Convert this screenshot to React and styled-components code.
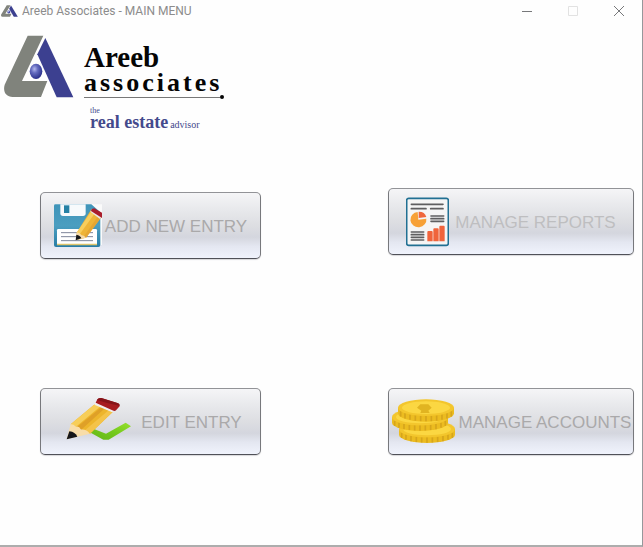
import React from "react";
import styled, { createGlobalStyle } from "styled-components";

const GlobalStyle = createGlobalStyle`
  * { box-sizing: border-box; }
  body { margin: 0; background: #fefefe; font-family: "Liberation Sans", Arial, sans-serif; }
`;

const Window = styled.div`
  display: flex;
  flex-direction: column;
  min-height: 100vh;
  background: #fefefe;
  border-right: 1px solid #96979b;
  border-bottom: 2px solid #adadad;
`;

const TitleBar = styled.header`
  display: flex;
  align-items: center;
  height: 22px;
  gap: 4px;
  padding-left: 1px;
`;

const Title = styled.h1`
  flex: 1;
  margin: 0;
  font: 400 12px/16px Roboto, "Segoe UI", sans-serif;
  color: #8c8c8c;
  white-space: nowrap;
`;

const WindowControls = styled.div`
  display: flex;
`;

const ControlButton = styled.button`
  display: flex;
  align-items: center;
  justify-content: center;
  width: 46px;
  height: 22px;
  padding: 0;
  border: 0;
  background: transparent;
  color: ${(p) => (p.disabled ? "#e2e2e2" : "#77787a")};
`;

const Brand = styled.section`
  display: flex;
  align-items: flex-start;
  gap: 10px;
  padding: 13px 4px 0;
`;

const BrandText = styled.div`
  display: flex;
  flex-direction: column;
  padding-top: 8px;
  font-family: "Liberation Serif", "Times New Roman", serif;
`;

const BrandName = styled.span`
  font-size: 29px;
  line-height: 28px;
  font-weight: 700;
  color: #050505;
`;

const BrandSubname = styled.span`
  font-size: 26px;
  line-height: 24px;
  font-weight: 700;
  letter-spacing: 3px;
  color: #050505;
`;

const BrandRule = styled.div`
  display: flex;
  align-items: center;
  width: 140px;
  height: 4px;

  &::before {
    content: "";
    flex: 1;
    height: 1px;
    background: #777;
  }
  &::after {
    content: "";
    width: 4px;
    height: 4px;
    border-radius: 50%;
    background: #050505;
  }
`;

const Tagline = styled.p`
  display: grid;
  grid-template-columns: auto 1fr;
  column-gap: 2px;
  align-items: baseline;
  margin: 8px 0 0 6px;
  color: #444a8c;
`;

const TaglineThe = styled.span`
  grid-column: 1 / -1;
  font-size: 8px;
  line-height: 8px;
`;

const TaglineMain = styled.strong`
  font-size: 18px;
  line-height: 14px;
`;

const TaglineEnd = styled.span`
  font-size: 10px;
  line-height: 14px;
`;

const Menu = styled.nav`
  display: flex;
  justify-content: space-between;
  align-items: flex-end;
  gap: 24px;
  padding: 56px 8px 32px 40px;
`;

const MenuColumn = styled.div`
  display: flex;
  flex-direction: column;
  gap: ${(p) => p.$gap}px;
  width: ${(p) => p.$width}px;
`;

const MenuButton = styled.button`
  display: flex;
  align-items: center;
  justify-content: center;
  gap: ${(p) => p.$gap || 3}px;
  height: 67px;
  padding: 0;
  border: 1px solid #77787c;
  border-top-color: #929397;
  border-bottom-color: #505158;
  border-radius: 5px;
  background: linear-gradient(#f5f5f7 0%, #e8e9ec 25%, #dddee2 50%, #d4d6de 68%, #e4e7f1 82%, #f0f3fc 100%);
  box-shadow: 0 1px 1px #d8d8da;
  color: ${(p) => (p.$faint ? "#bebec0" : "#aaa9aa")};
  font: 400 17px/20px "Liberation Sans", Arial, sans-serif;
  white-space: nowrap;
`;

const Label = styled.span`
  padding-top: 2px;
`;

const Icon = styled.svg`
  display: block;
  flex: none;
`;

function LogoMark({ width, height }) {
  return (
    <Icon width={width} height={height} viewBox="12 105 210 189" preserveAspectRatio="none" aria-hidden="true">
      <defs>
        <radialGradient id="orb" cx="38%" cy="35%" r="65%">
          <stop offset="0" stopColor="#b4b9ee" />
          <stop offset=".4" stopColor="#656cc0" />
          <stop offset="1" stopColor="#2b318c" />
        </radialGradient>
      </defs>
      <path d="M83 107H130L66 243H142L123 291H38C18 291 8 275 14 254Z" fill="#80837c" />
      <path d="M136 114L220 292H170L112 163Z" fill="#3c4090" />
      <ellipse cx="108" cy="214" rx="19" ry="23" fill="url(#orb)" />
    </Icon>
  );
}

function DiskIcon() {
  return (
    <Icon width="48" height="48" viewBox="72 65 144 144" aria-hidden="true">
      <defs>
        <linearGradient id="disk" x1="0" y1="0" x2="0" y2="1">
          <stop offset="0" stopColor="#3f94b9" />
          <stop offset=".5" stopColor="#4b9ec0" />
          <stop offset="1" stopColor="#287da5" />
        </linearGradient>
      </defs>
      <path d="M72 72H216V194H72Z" fill="#fafafa" />
      <path d="M76 72H184L211 96V194Q211 200 205 200H78Q72 200 72 194V76Q72 72 76 72Z" fill="url(#disk)" />
      <path d="M91 72H167V99Q167 107 159 107H99Q91 107 91 99Z" fill="#f7fafc" />
      <path d="M102 75H118V98H102Z" fill="#2681a5" />
      <path d="M81 150Q81 146 85 146H197Q201 146 201 150V194H81Z" fill="#fff" />
      <path d="M81 190H201V195H81Z" fill="#dfc56b" />
      <path d="M93 157H189M93 169H189M93 181H189" stroke="#7e8599" strokeWidth="3" />
      <path d="M140 157L143 178L168 172L215 109L184 87Z" fill="#eeb437" />
      <path d="M140 157L183 94L193 101L148 163Z" fill="#f8ce5d" />
      <path d="M160 171L206 105L214 111L168 172Z" fill="#e5a633" />
      <path d="M140 156L138 179L168 172Q162 165 155 165Q150 157 140 156Z" fill="#f5d9a7" />
      <path d="M139 163L137 180L154 174Q151 165 139 163Z" fill="#171719" />
      <path d="M181 94L186 87L216 108L210 116Z" fill="#e9e7e5" />
      <path d="M183 92Q184 84 193 84L216 97V113Z" fill="#a91d2b" />
    </Icon>
  );
}

function ReportIcon() {
  return (
    <Icon width="43" height="50" viewBox="77 48 129 150" aria-hidden="true">
      <rect x="79" y="52" width="125" height="141" rx="6" fill="#f5f5f5" stroke="#217093" strokeWidth="5" />
      <g stroke="#5e5e60" strokeWidth="5" strokeLinecap="round">
        <path d="M93 70H188M93 83H137M151 83H188M152 105H190M152 113H190M152 121H190M93 153H130M93 161H130M93 169H130M93 177H130" />
      </g>
      <path d="M114 116L112 93A24 23 0 1 0 138 113Z" fill="#f7a136" />
      <path d="M115 111V92A23 22 0 0 1 138 108Z" fill="#ef663c" />
      <path d="M141 153Q141 150 144 150H154Q157 150 157 153V181H141ZM159 145Q159 142 162 142H172Q175 142 175 145V181H159ZM177 137Q177 134 180 134H190Q193 134 193 137V181H177Z" fill="#f0643c" />
    </Icon>
  );
}

function EditIcon() {
  return (
    <Icon width="72" height="51" viewBox="88 48 216 153" aria-hidden="true">
      <defs>
        <linearGradient id="tick" x1="0" y1="1" x2="1" y2="0">
          <stop offset="0" stopColor="#65b515" />
          <stop offset=".5" stopColor="#73c81c" />
          <stop offset="1" stopColor="#96e12b" />
        </linearGradient>
      </defs>
      <path d="M175 154L191 146L229 161L288 128L304 139L237 179H221Z" fill="url(#tick)" />
      <path d="M123 133L195 73L249 96L181 161Z" fill="#edb52c" />
      <path d="M123 133L195 73L211 80L139 140Z" fill="#f7ce59" />
      <path d="M143 140L215 82L224 86L154 150Z" fill="#dfa027" />
      <path d="M163 153L237 91L249 96L181 161Z" fill="#f4c349" />
      <path d="M123 132Q132 132 139 140Q149 138 154 149Q168 146 181 161L111 178Z" fill="#f8dda9" />
      <path d="M119 154Q137 156 143 170L111 178Z" fill="#161619" />
      <path d="M194 74L199 67L255 88L248 97Z" fill="#f1eeee" />
      <path d="M198 68L203 58Q207 53 215 54L263 69Q271 71 270 79L259 91Q256 95 248 91Z" fill="#a71b20" />
      <path d="M202 60Q207 53 215 54L263 69Q271 71 269 77Q237 72 202 60Z" fill="#861419" />
    </Icon>
  );
}

function Coin({ cx, cy }) {
  const left = cx - 84;
  const right = cx + 84;
  const slits = [-76, -63, -48, -32, -16, 0, 16, 32, 48, 63, 76];
  return (
    <g>
      <path d={`M${left} ${cy}V${cy + 17}A84 25 0 0 0 ${right} ${cy + 17}V${cy}Z`} fill="#ecbc20" />
      {slits.map((dx) => {
        const y = cy + 25 * Math.sqrt(1 - (dx / 84) ** 2);
        return <path key={dx} d={`M${cx + dx} ${y}V${y + 16}`} stroke="#d6a51c" strokeWidth="5" />;
      })}
      <ellipse cx={cx} cy={cy} rx="84" ry="25" fill="#f3c62d" />
      <ellipse cx={cx} cy={cy} rx="72" ry="19" fill="#fbd742" />
    </g>
  );
}

function CoinsIcon() {
  return (
    <Icon width="65" height="47" viewBox="33 54 195 141" aria-hidden="true">
      <Coin cx={141} cy={147} />
      <Coin cx={120} cy={111} />
      <Coin cx={138} cy={83} />
      <path d="M111 83L121 73H145L155 83L145 92L149 99H121L124 92Z" fill="#e1b421" />
    </Icon>
  );
}

export default function App() {
  return (
    <>
      <GlobalStyle />
      <Window>
        <TitleBar>
          <LogoMark width={17} height={12} />
          <Title>Areeb Associates - MAIN MENU</Title>
          <WindowControls>
            <ControlButton type="button" aria-label="Minimize">
              <svg width="10" height="10" stroke="currentColor" aria-hidden="true"><path d="M0 5.5H10" /></svg>
            </ControlButton>
            <ControlButton type="button" aria-label="Maximize" disabled>
              <svg width="10" height="10" stroke="currentColor" fill="none" aria-hidden="true"><path d="M.5 .5H9.5V9.5H.5Z" /></svg>
            </ControlButton>
            <ControlButton type="button" aria-label="Close">
              <svg width="10" height="10" stroke="currentColor" aria-hidden="true"><path d="M0 0L10 10M10 0L0 10" /></svg>
            </ControlButton>
          </WindowControls>
        </TitleBar>
        <main>
          <Brand aria-label="Areeb associates">
            <LogoMark width={70} height={63} />
            <BrandText>
              <BrandName>Areeb</BrandName>
              <BrandSubname>associates</BrandSubname>
              <BrandRule />
              <Tagline>
                <TaglineThe>the</TaglineThe>
                <TaglineMain>real estate</TaglineMain>
                <TaglineEnd>advisor</TaglineEnd>
              </Tagline>
            </BrandText>
          </Brand>
          <Menu aria-label="Main menu">
            <MenuColumn $width={221} $gap={129}>
              <MenuButton type="button"><DiskIcon /><Label>ADD NEW ENTRY</Label></MenuButton>
              <MenuButton type="button" $gap={10}><EditIcon /><Label>EDIT ENTRY</Label></MenuButton>
            </MenuColumn>
            <MenuColumn $width={246} $gap={133}>
              <MenuButton type="button" $gap={6} $faint><ReportIcon /><Label>MANAGE REPORTS</Label></MenuButton>
              <MenuButton type="button"><CoinsIcon /><Label>MANAGE ACCOUNTS</Label></MenuButton>
            </MenuColumn>
          </Menu>
        </main>
      </Window>
    </>
  );
}
